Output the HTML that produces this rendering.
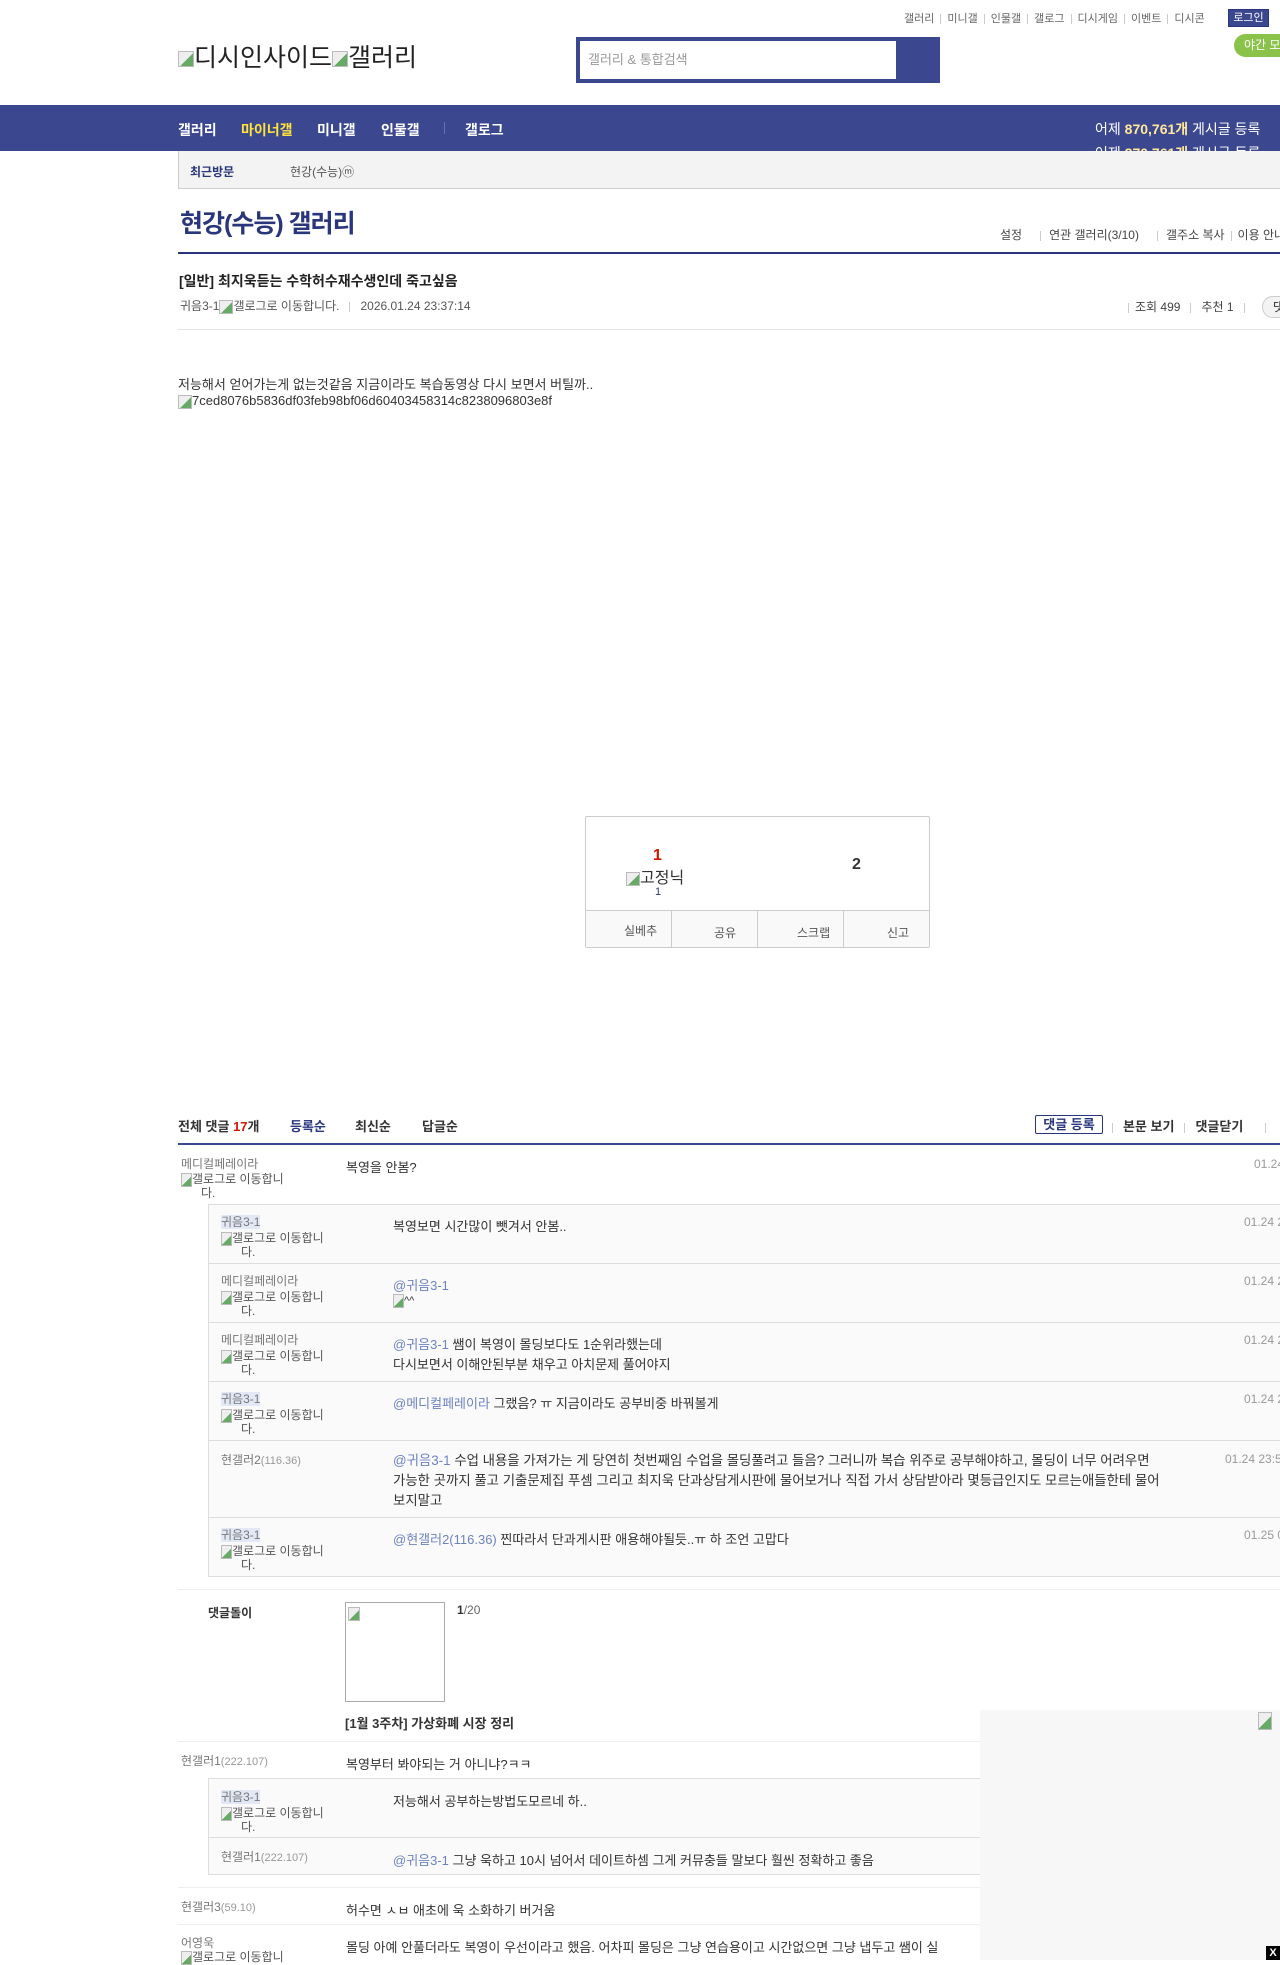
<!DOCTYPE html>
<html><head><meta charset="utf-8">
<style>
*{margin:0;padding:0;box-sizing:border-box}
body{width:1280px;height:1960px;overflow:hidden;position:relative;background:#fff;font-family:"Liberation Sans","Noto Sans CJK KR",sans-serif;font-size:13px;color:#333}
.a{position:absolute;white-space:nowrap}
.nick{color:#777;font-size:12px;line-height:14px}
.hl{background:#e3e8f6;color:#777}
.at{color:#6d83c0}
.sep{display:inline-block;width:1px;height:10px;background:#ccc;margin:0 6px;vertical-align:middle}
.nest{position:absolute;left:208px;width:1072px;background:#fafafa;border:1px solid #ddd;border-right:none}
.nr{position:absolute;left:0;right:0;border-bottom:1px solid #ddd}
.bimg{display:inline-block;width:16px;height:16px;vertical-align:middle;background:linear-gradient(135deg,#eee 55%,#6a6 55%);border:1px solid #bbb}
.ic{font-size:13px;color:#333;line-height:14px}
.dt{color:#999;font-size:12px}
.gl{font-size:12px;color:#555;line-height:13px}
</style></head><body>

<div class="a" style="left:904px;top:10px;font-size:11px;color:#666">갤러리<span class="sep"></span>미니갤<span class="sep"></span>인물갤<span class="sep"></span>갤로그<span class="sep"></span>디시게임<span class="sep"></span>이벤트<span class="sep"></span>디시콘</div>
<div class="a" style="left:1228px;top:9px;width:41px;height:18px;background:#3b4890;border:1px solid #29367c;color:#fff;font-size:11px;line-height:16px;text-align:center">로그인</div>
<div class="a" style="left:1234px;top:34px;width:60px;height:23px;background:#8bc34a;border-radius:12px;color:#fff;font-size:12px;line-height:23px;padding-left:10px">야간 모드</div>

<div class="a" style="left:178px;top:38px;font-size:25px;color:#222"><span class="bimg"></span>디시인사이드<span class="bimg"></span>갤러리</div>
<div class="a" style="left:576px;top:37px;width:364px;height:46px;background:#3b4890"></div>
<div class="a" style="left:580px;top:41px;width:316px;height:38px;background:#fff;color:#999;font-size:13px;line-height:38px;padding-left:8px">갤러리 &amp; 통합검색</div>

<div class="a" style="left:0;top:105px;width:1280px;height:46px;background:#3b4890"></div>
<div class="a" style="left:178px;top:120px;font-size:14px;font-weight:bold;color:#fff">갤러리</div>
<div class="a" style="left:241px;top:120px;font-size:14px;font-weight:bold;color:#ffe33b">마이너갤</div>
<div class="a" style="left:317px;top:120px;font-size:14px;font-weight:bold;color:#fff">미니갤</div>
<div class="a" style="left:381px;top:120px;font-size:14px;font-weight:bold;color:#fff">인물갤</div>
<div class="a" style="left:444px;top:122px;width:1px;height:12px;background:#6673b0"></div>
<div class="a" style="left:465px;top:120px;font-size:14px;font-weight:bold;color:#fff">갤로그</div>
<div class="a" style="left:1095px;top:119px;font-size:14px;color:#fff">어제 <b style="color:#ffe89a">870,761개</b> 게시글 등록</div>
<div class="a" style="left:1095px;top:143px;font-size:14px;color:#fff;height:8px;overflow:hidden">어제 <b style="color:#ffe89a">870,761개</b> 게시글 등록</div>

<div class="a" style="left:178px;top:151px;width:1102px;height:38px;background:#f3f3f3;border-left:1px solid #ccc;border-bottom:1px solid #ccc"></div>
<div class="a" style="left:190px;top:163px;font-size:12px;font-weight:bold;color:#29367c">최근방문</div>
<div class="a" style="left:290px;top:163px;font-size:12px;color:#555">현강(수능)ⓜ</div>

<div class="a" style="left:180px;top:204px;font-size:25px;color:#29367c;font-weight:bold;letter-spacing:-1px">현강(수능) 갤러리</div>
<div class="a" style="left:1000px;top:226px;font-size:12px;color:#444">설정<span class="sep" style="margin:0 8px 0 18px"></span>연관 갤러리(3/10)<span class="sep" style="margin:0 8px 0 18px"></span>갤주소 복사<span class="sep"></span>이용 안내</div>
<div class="a" style="left:178px;top:252px;width:1102px;height:2px;background:#29367c"></div>

<div class="a" style="left:179px;top:271px;font-size:14px;font-weight:bold;color:#222">[일반] 최지욱듣는 수학허수재수생인데 죽고싶음</div>
<div class="a" style="left:180px;top:297px;font-size:12px;color:#555">귀음3-1<span class="bimg" style="width:14px;height:14px"></span>갤로그로 이동합니다.<span class="sep" style="margin:0 10px"></span>2026.01.24 23:37:14</div>
<div class="a" style="left:1122px;top:298px;font-size:12px;color:#444"><span class="sep"></span>조회 499<span class="sep" style="margin:0 10px"></span>추천 1<span class="sep" style="margin:0 10px"></span></div>
<div class="a" style="left:1262px;top:296px;width:30px;height:22px;border:1px solid #ccc;border-radius:11px;background:#f3f3f3;font-size:12px;padding-left:10px;line-height:20px">댓글</div>
<div class="a" style="left:178px;top:329px;width:1102px;height:1px;background:#e4e4e4"></div>

<div class="a" style="left:178px;top:374px;font-size:13px;color:#333">저능해서 얻어가는게 없는것같음 지금이라도 복습동영상 다시 보면서 버틸까..</div>
<div class="a" style="left:178px;top:393px;font-size:13px;color:#333"><span class="bimg" style="width:14px;height:14px"></span>7ced8076b5836df03feb98bf06d60403458314c8238096803e8f</div>

<div class="a" style="left:585px;top:816px;width:345px;height:132px;border:1px solid #ccc;border-radius:2px"></div>
<div class="a" style="left:653px;top:847px;font-size:16px;font-weight:bold;color:#d31900">1</div>
<div class="a" style="left:626px;top:864px;font-size:16px;color:#333"><span class="bimg" style="width:14px;height:14px"></span>고정닉</div>
<div class="a" style="left:655px;top:886px;font-size:11px;color:#29367c">1</div>
<div class="a" style="left:852px;top:856px;font-size:16px;font-weight:bold;color:#333">2</div>
<div class="a" style="left:586px;top:910px;width:343px;height:37px;background:#f9f9f9;border-top:1px solid #ccc"></div>
<div class="a" style="left:671px;top:911px;width:1px;height:36px;background:#ccc"></div>
<div class="a" style="left:757px;top:911px;width:1px;height:36px;background:#ccc"></div>
<div class="a" style="left:843px;top:911px;width:1px;height:36px;background:#ccc"></div>
<div class="a" style="left:624px;top:922px;font-size:12px;color:#555">실베추</div>
<div class="a" style="left:714px;top:924px;font-size:12px;color:#555">공유</div>
<div class="a" style="left:797px;top:924px;font-size:12px;color:#555">스크랩</div>
<div class="a" style="left:887px;top:924px;font-size:12px;color:#555">신고</div>

<div class="a" style="left:178px;top:1116px;font-size:13px;font-weight:bold;color:#333">전체 댓글 <span style="color:#d31900">17</span>개</div>
<div class="a" style="left:290px;top:1116px;font-size:13px;font-weight:bold;color:#29367c">등록순</div>
<div class="a" style="left:355px;top:1116px;font-size:13px;font-weight:bold;color:#333">최신순</div>
<div class="a" style="left:422px;top:1116px;font-size:13px;font-weight:bold;color:#333">답글순</div>
<div class="a" style="left:1035px;top:1115px;width:68px;height:19px;border:1px solid #29367c;border-radius:2px;font-size:13px;font-weight:bold;color:#29367c;text-align:center;line-height:17px">댓글 등록</div>
<div class="a" style="left:1112px;top:1116px;font-size:13px;font-weight:bold;color:#333"><span class="sep" style="margin:0 10px 0 0"></span>본문 보기<span class="sep" style="margin:0 10px"></span>댓글닫기<span class="sep" style="margin:0 10px 0 22px"></span></div>
<div class="a" style="left:178px;top:1143px;width:1102px;height:2px;background:#3b4890"></div>

<div class="a nick" style="left:181px;top:1157px">메디컬페레이라</div>
<div class="a gl" style="left:181px;top:1173px"><span class="bimg" style="width:11px;height:14px"></span>갤로그로 이동합니<br>&nbsp;&nbsp;&nbsp;&nbsp;&nbsp;&nbsp;다.</div>
<div class="a" style="left:346px;top:1157px">복영을 안봄?</div>
<div class="a dt" style="left:1254px;top:1157px">01.24</div>

<div class="nest" style="top:1204px;height:373px">
 <div class="nr" style="top:0;height:59px"></div>
 <div class="nr" style="top:59px;height:59px"></div>
 <div class="nr" style="top:118px;height:59px"></div>
 <div class="nr" style="top:177px;height:59px"></div>
 <div class="nr" style="top:236px;height:77px"></div>
</div>
<div class="a nick" style="left:221px;top:1215px"><span class="hl">귀음3-1</span></div>
<div class="a gl" style="left:221px;top:1232px"><span class="bimg" style="width:11px;height:14px"></span>갤로그로 이동합니<br>&nbsp;&nbsp;&nbsp;&nbsp;&nbsp;&nbsp;다.</div>
<div class="a" style="left:393px;top:1216px">복영보면 시간많이 뺏겨서 안봄..</div>
<div class="a dt" style="left:1244px;top:1215px">01.24 23</div>

<div class="a nick" style="left:221px;top:1274px">메디컬페레이라</div>
<div class="a gl" style="left:221px;top:1291px"><span class="bimg" style="width:11px;height:14px"></span>갤로그로 이동합니<br>&nbsp;&nbsp;&nbsp;&nbsp;&nbsp;&nbsp;다.</div>
<div class="a at" style="left:393px;top:1275px">@귀음3-1</div>
<div class="a" style="left:393px;top:1294px;font-size:11px"><span class="bimg" style="width:11px;height:14px"></span>^^</div>
<div class="a dt" style="left:1244px;top:1274px">01.24 23</div>

<div class="a nick" style="left:221px;top:1333px">메디컬페레이라</div>
<div class="a gl" style="left:221px;top:1350px"><span class="bimg" style="width:11px;height:14px"></span>갤로그로 이동합니<br>&nbsp;&nbsp;&nbsp;&nbsp;&nbsp;&nbsp;다.</div>
<div class="a" style="left:393px;top:1334px"><span class="at">@귀음3-1</span> 쌤이 복영이 몰딩보다도 1순위라했는데</div>
<div class="a" style="left:393px;top:1354px">다시보면서 이해안된부분 채우고 아치문제 풀어야지</div>
<div class="a dt" style="left:1244px;top:1333px">01.24 23</div>

<div class="a nick" style="left:221px;top:1392px"><span class="hl">귀음3-1</span></div>
<div class="a gl" style="left:221px;top:1409px"><span class="bimg" style="width:11px;height:14px"></span>갤로그로 이동합니<br>&nbsp;&nbsp;&nbsp;&nbsp;&nbsp;&nbsp;다.</div>
<div class="a" style="left:393px;top:1393px"><span class="at">@메디컬페레이라</span> 그랬음? ㅠ 지금이라도 공부비중 바꿔볼게</div>
<div class="a dt" style="left:1244px;top:1392px">01.24 23</div>

<div class="a nick" style="left:221px;top:1453px">현갤러2<span style="font-size:11px;color:#999">(116.36)</span></div>
<div class="a" style="left:393px;top:1451px;white-space:normal;width:772px;line-height:20px;font-size:13.4px"><span class="at">@귀음3-1</span> 수업 내용을 가져가는 게 당연히 첫번째임 수업을 몰딩풀려고 들음? 그러니까 복습 위주로 공부해야하고, 몰딩이 너무 어려우면 가능한 곳까지 풀고 기출문제집 푸셈 그리고 최지욱 단과상담게시판에 물어보거나 직접 가서 상담받아라 몇등급인지도 모르는애들한테 물어보지말고</div>
<div class="a dt" style="left:1225px;top:1452px">01.24 23:5</div>

<div class="a nick" style="left:221px;top:1528px"><span class="hl">귀음3-1</span></div>
<div class="a gl" style="left:221px;top:1545px"><span class="bimg" style="width:11px;height:14px"></span>갤로그로 이동합니<br>&nbsp;&nbsp;&nbsp;&nbsp;&nbsp;&nbsp;다.</div>
<div class="a" style="left:393px;top:1529px"><span class="at">@현갤러2(116.36)</span> 찐따라서 단과게시판 애용해야될듯..ㅠ 하 조언 고맙다</div>
<div class="a dt" style="left:1244px;top:1528px">01.25 0</div>

<div class="a" style="left:178px;top:1589px;width:1102px;height:1px;background:#eee"></div>

<div class="a" style="left:208px;top:1604px;font-size:12px;font-weight:bold;color:#333">댓글돌이</div>
<div class="a" style="left:345px;top:1602px;width:100px;height:100px;border:1px solid #aaa;padding:2px"><span class="bimg" style="width:12px;height:14px"></span></div>
<div class="a" style="left:457px;top:1603px;font-size:12px"><b>1</b><span style="color:#666">/20</span></div>
<div class="a" style="left:345px;top:1713px;font-size:13px;font-weight:bold">[1월 3주차] 가상화폐 시장 정리</div>
<div class="a" style="left:178px;top:1741px;width:1102px;height:1px;background:#eee"></div>

<div class="a nick" style="left:181px;top:1754px">현갤러1<span style="font-size:11px;color:#999">(222.107)</span></div>
<div class="a" style="left:346px;top:1754px">복영부터 봐야되는 거 아니냐?ㅋㅋ</div>

<div class="nest" style="top:1778px;height:97px">
 <div class="nr" style="top:0;height:59px"></div>
</div>
<div class="a nick" style="left:221px;top:1790px"><span class="hl">귀음3-1</span></div>
<div class="a gl" style="left:221px;top:1807px"><span class="bimg" style="width:11px;height:14px"></span>갤로그로 이동합니<br>&nbsp;&nbsp;&nbsp;&nbsp;&nbsp;&nbsp;다.</div>
<div class="a" style="left:393px;top:1791px">저능해서 공부하는방법도모르네 하..</div>
<div class="a nick" style="left:221px;top:1850px">현갤러1<span style="font-size:11px;color:#999">(222.107)</span></div>
<div class="a" style="left:393px;top:1850px"><span class="at">@귀음3-1</span> 그냥 욱하고 10시 넘어서 데이트하셈 그게 커뮤충들 말보다 훨씬 정확하고 좋음</div>

<div class="a" style="left:178px;top:1887px;width:1102px;height:1px;background:#eee"></div>
<div class="a nick" style="left:181px;top:1900px">현갤러3<span style="font-size:11px;color:#999">(59.10)</span></div>
<div class="a" style="left:346px;top:1900px">허수면 ㅅㅂ 애초에 욱 소화하기 버거움</div>
<div class="a" style="left:178px;top:1924px;width:1102px;height:1px;background:#eee"></div>
<div class="a nick" style="left:181px;top:1936px">어영욱</div>
<div class="a gl" style="left:181px;top:1951px"><span class="bimg" style="width:11px;height:14px"></span>갤로그로 이동합니</div>
<div class="a" style="left:346px;top:1937px">몰딩 아예 안풀더라도 복영이 우선이라고 했음. 어차피 몰딩은 그냥 연습용이고 시간없으면 그냥 냅두고 쌤이 실</div>

<div class="a" style="left:980px;top:1710px;width:300px;height:250px;background:#f7f7f7"></div>
<div class="a" style="left:1258px;top:1712px"><span class="bimg" style="width:14px;height:18px"></span></div>
<div class="a" style="left:1266px;top:1946px;width:14px;height:14px;background:#000;color:#fff;font-size:11px;font-weight:bold;text-align:center;line-height:14px">X</div>
</body></html>
